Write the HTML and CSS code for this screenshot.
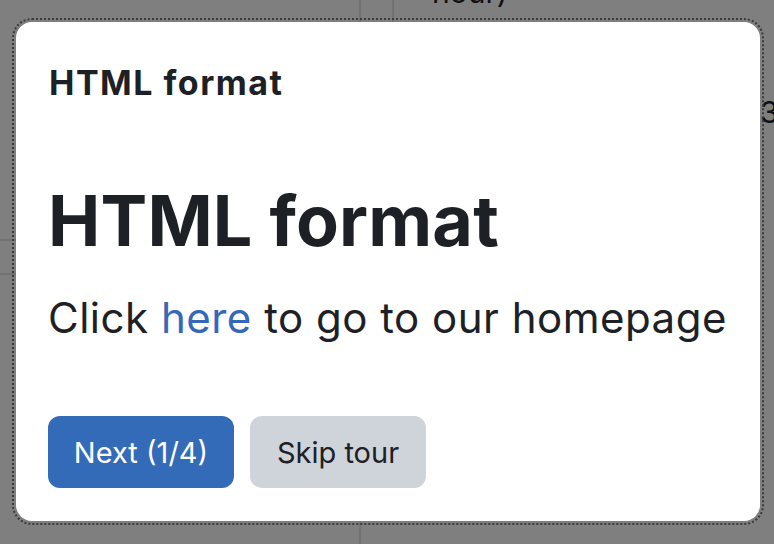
FILE: index.html
```html
<!DOCTYPE html>
<html lang="en">
<head>
<meta charset="utf-8">
<title>HTML format tour</title>
<link rel="stylesheet" href="styles.css">
</head>
<body>
<div class="page">
  <div class="bg-text bg-hour">hour)</div>
  <div class="bg-text bg-three">3</div>
</div>
<div class="backdrop"></div>
<div class="tour" role="dialog" aria-labelledby="tour-title">
  <h5 class="tour-title" id="tour-title">HTML format</h5>
  <div class="tour-body">
    <h1 class="big">HTML format</h1>
    <p class="lead">Click <a href="#">here</a> to go to our homepage</p>
  </div>
  <div class="tour-footer">
    <button class="btn btn-primary">Next (1/4)</button>
    <button class="btn btn-secondary">Skip tour</button>
  </div>
</div>
</body>
</html>
```

FILE: styles.css
```css
html, body {
  margin: 0;
  padding: 0;
  width: 774px;
  height: 544px;
  overflow: hidden;
  font-family: Inter, "Noto Sans", sans-serif;
  color: #1d2125;
}
.page {
  position: relative;
  width: 774px;
  height: 544px;
  background:
    linear-gradient(#e4e4e4, #e4e4e4) 359px 0 / 2px 100% no-repeat,
    linear-gradient(#e4e4e4, #e4e4e4) 392px 0 / 2px 30px no-repeat,
    linear-gradient(#e4e4e4, #e4e4e4) 0 239px / 20px 2px no-repeat,
    linear-gradient(#e4e4e4, #e4e4e4) 0 273px / 20px 2px no-repeat,
    #fff;
}
.bg-text {
  position: absolute;
  font-size: 30px;
  color: #1d2125;
}
.bg-hour { left: 432px; top: -26px; }
.bg-three { left: 760px; top: 94px; }
.backdrop {
  position: absolute;
  inset: 0;
  background: rgba(0, 0, 0, 0.5);
}
.tour {
  position: absolute;
  left: 16px;
  top: 22px;
  width: 744px;
  height: 499px;
  box-sizing: border-box;
  background: #fff;
  border-radius: 16px;
  outline: 2px dotted #3a3a3a;
  outline-offset: 2px;
  padding: 41px 24px 33px 32px;
  display: flex;
  flex-direction: column;
}
.tour-title {
  margin: 0;
  font-size: 34px;
  font-weight: 700;
  line-height: 1.2;
  letter-spacing: 1.5px;
  padding-left: 1px;
}
.tour-body {
  flex: 1;
  padding-top: 75px;
}
.big {
  margin: 0 0 30px;
  font-size: 70px;
  font-weight: 700;
  line-height: 1.2;
  letter-spacing: 0.2px;
}
.lead {
  margin: 0;
  font-size: 42px;
  line-height: 1.2;
  letter-spacing: 0.5px;
  white-space: nowrap;
}
.lead a {
  color: #3568b8;
  text-decoration: none;
}
.tour-footer {
  display: flex;
  gap: 16px;
}
.btn {
  height: 72px;
  border: none;
  border-radius: 12px;
  font-family: inherit;
  font-size: 29px;
  padding: 0;
}
.btn-primary {
  background: #346bb9;
  color: #fff;
  width: 186px;
}
.btn-secondary {
  background: #ced4da;
  color: #1d2125;
  width: 176px;
}
```
